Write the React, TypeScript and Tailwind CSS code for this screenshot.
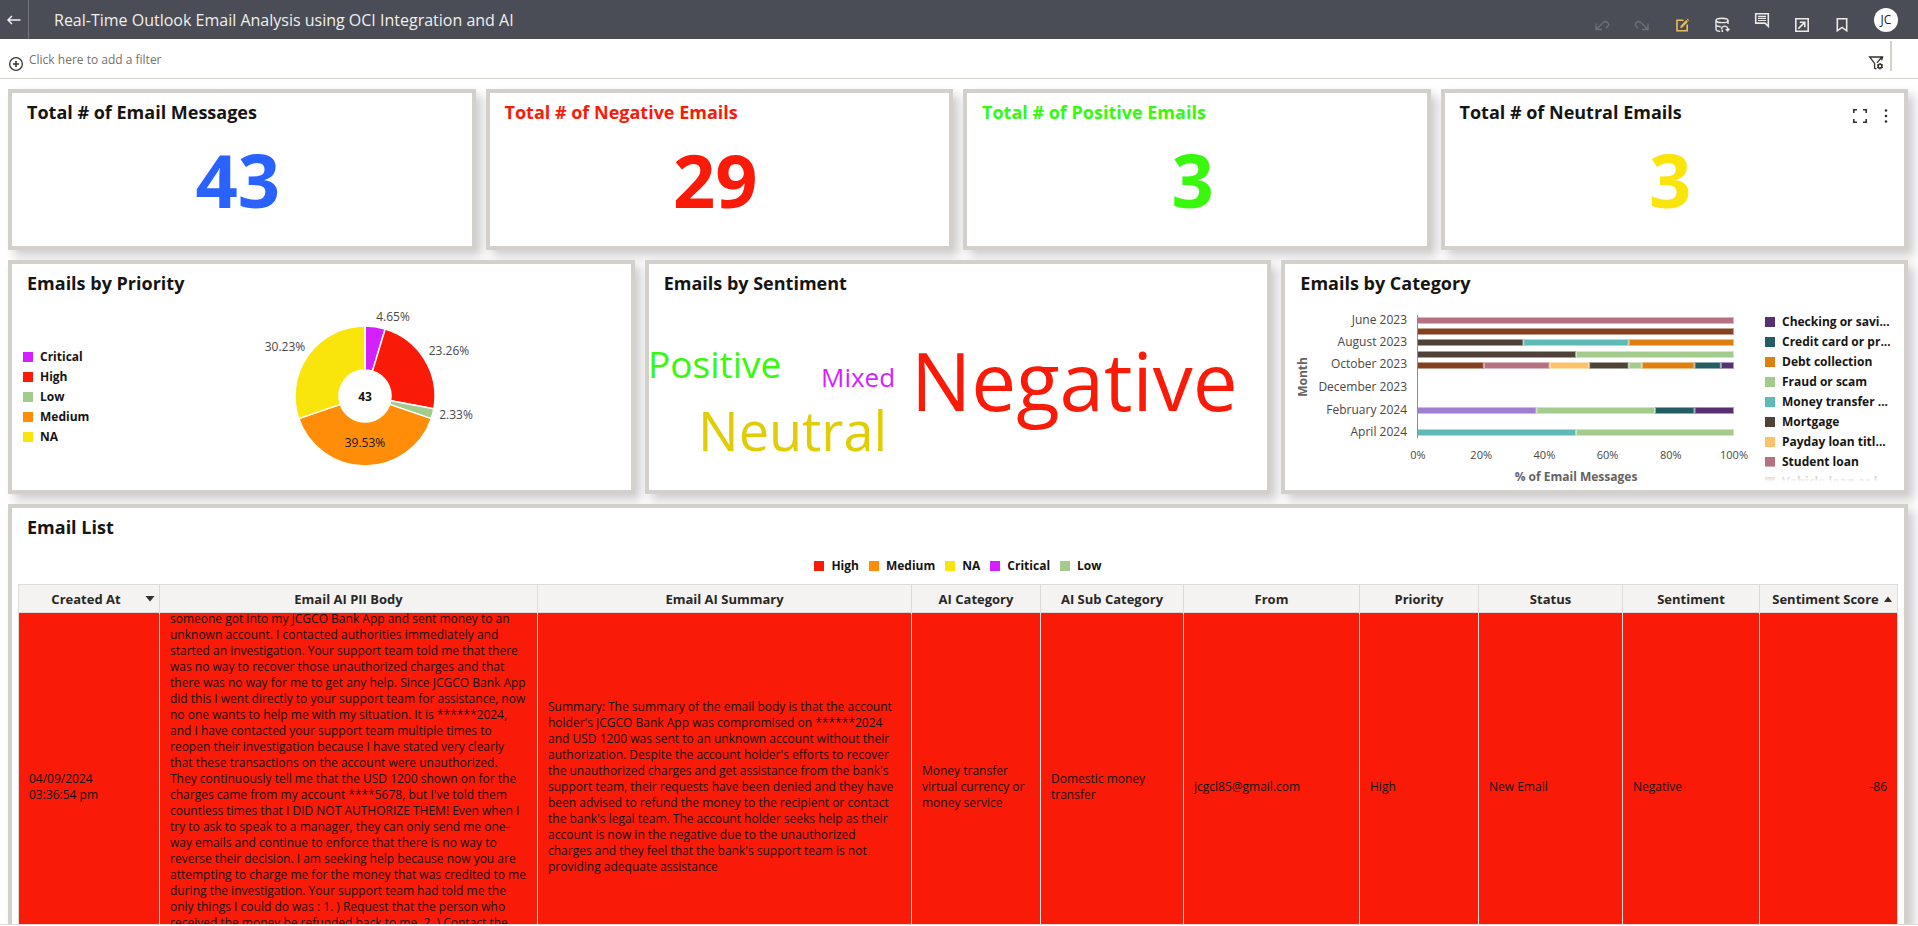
import React from "react";

type Tone = { label: string; swatch: string };

function IconButton({ label, low = false, children }: { label: string; low?: boolean; children: React.ReactNode }) {
  return (
    <button type="button" aria-label={label} className={low ? "flex h-full w-10 items-center justify-center pt-2.5" : "flex h-full w-10 items-center justify-center"}>
      <svg viewBox="0 0 16 16" className="h-4 w-4" fill="none" stroke="currentColor" strokeWidth="1.4">
        {children}
      </svg>
    </button>
  );
}

function Header() {
  return (
    <header className="flex h-[39px] shrink-0 items-center bg-[#4a4d55] text-[#f1efed]">
      <button type="button" aria-label="Back" className="flex h-full w-[29px] items-center justify-center border-r border-[#74767c]">
        <svg viewBox="0 0 16 16" className="h-4 w-4" fill="none" stroke="currentColor" strokeWidth="1.5">
          <path d="M14.5 8H2.2M6 4L2 8l4 4" />
        </svg>
      </button>
      <h1 className="flex-1 pl-[25px] text-base leading-6">Real-Time Outlook Email Analysis using OCI Integration and AI</h1>
      <div className="flex h-full text-[#eceae8]">
        <div className="flex h-full text-[#6c6f76]">
          <IconButton label="Undo" low>
            <path d="M2 6.500v6h6M2.500 12l6.800-6.600a3 3 0 0 1 4.300 0 3 3 0 0 1 0 4.200L12 11.200" />
          </IconButton>
          <IconButton label="Redo" low>
            <path d="M14 6.500v6H8M13.500 12L6.700 5.400a3 3 0 0 0-4.300 0 3 3 0 0 0 0 4.200L4 11.200" />
          </IconButton>
        </div>
        <div className="text-[#e9bd5b]">
          <IconButton label="Edit" low>
            <path d="M9.500 3.200H3v10.600h10.200V7.500" strokeWidth="1.600" />
            <path d="M6.200 11l.5-2.300 5.500-5.600 1.700 1.700-5.600 5.600z" fill="currentColor" stroke="none" />
            <path d="M12.800 2.600l.8-.8 1.400 1.400-.8.8z" fill="currentColor" stroke="none" />
          </IconButton>
        </div>
        <IconButton label="Refresh data" low>
          <ellipse cx="8" cy="3.400" rx="6" ry="2.200" />
          <path d="M2 3.400v8.800c0 1.100 1.800 2 4.200 2.200M14 3.400V7M2 7.600c0 1.100 1.900 2 4.800 2.200" />
          <path d="M7.500 12.200a3.200 3.200 0 0 1 6.200-1v2.600M15.500 11.800l-1.800 2-2-1.600M8.300 15v-2.200" />
        </IconButton>
        <IconButton label="Comments">
          <path d="M1.700 1.700h12.600v12.600l-3.300-3.200H1.700z" strokeWidth="1.600" />
          <path d="M4 4.300h8M4 6.400h8M4 8.500h8" strokeWidth="1.200" />
        </IconButton>
        <IconButton label="Open in new window" low>
          <path d="M1.800 1.800h12.400v12.400H1.800z" strokeWidth="1.600" />
          <path d="M5.800 5.200h5v5M10.600 5.400L4.400 11.600" strokeWidth="1.600" />
        </IconButton>
        <IconButton label="Bookmark" low>
          <path d="M3.300 1.800h9.400v12L8 10.400l-4.700 3.400z" strokeWidth="1.600" />
        </IconButton>
      </div>
      <button type="button" className="mr-5 ml-3 h-6 w-6 rounded-full bg-white text-center text-[12px] leading-6 text-[#222]">JC</button>
    </header>
  );
}

function FilterBar() {
  return (
    <div className="flex h-10 shrink-0 items-stretch border-b border-[#d3cfca]">
      <button type="button" className="flex gap-[5px] pt-3 pl-2 text-[12px] leading-[18px] text-[#77716b]">
        <svg viewBox="0 0 16 16" className="mt-[5px] h-4 w-4 text-[#3a3632]" fill="none" stroke="currentColor" strokeWidth="1.3">
          <circle cx="8" cy="8" r="6.300" />
          <path d="M8 5v6M5 8h6" strokeWidth="1.600" />
        </svg>
        Click here to add a filter
      </button>
      <button type="button" aria-label="Filter settings" className="mr-[6px] ml-auto pt-[9px] text-[#33302d]">
        <svg viewBox="0 0 16 16" className="h-4 w-4" fill="none" stroke="currentColor" strokeWidth="1.300">
          <path d="M13.600 5.200L14.600 2H1.600l5 6.400v4.800l2 .8M9 7.800L13.800 2" />
          <circle cx="12" cy="11.200" r="1.900" strokeWidth="1.500" />
          <path d="M12 8v1.200M12 13.200v1.200M9.200 9.600l1 .6M13.800 12.200l1 .6M14.800 9.600l-1 .6M10.200 12.200l-1 .6" strokeWidth="1.100" />
        </svg>
      </button>
      <span className="mt-[2px] mr-[26px] h-[30px] w-[2px] bg-[#d3cfca]" />
    </div>
  );
}

const cardBox = "border-4 border-[#d3cfca] bg-white shadow-[6px_6px_10px_rgba(0,0,0,0.2)]";

function Card({ title, titleClass = "text-[#161513]", className = "", actions, children }: { title: string; titleClass?: string; className?: string; actions?: React.ReactNode; children: React.ReactNode }) {
  return (
    <section className={`${cardBox} ${className}`}>
      <div className="flex h-[38px] items-start justify-between pt-[7px] pl-[15px]">
        <h2 className={`text-[18px] leading-6 font-bold ${titleClass}`}>{title}</h2>
        {actions}
      </div>
      {children}
    </section>
  );
}

const metrics = [
  { title: "Total # of Email Messages", value: 43, titleClass: "text-[#161513]", valueClass: "text-[#2962ff]" },
  { title: "Total # of Negative Emails", value: 29, titleClass: "text-[#fa1a08]", valueClass: "text-[#fa1a08]" },
  { title: "Total # of Positive Emails", value: 3, titleClass: "text-[#37f80d]", valueClass: "text-[#37f80d]" },
  { title: "Total # of Neutral Emails", value: 3, titleClass: "text-[#161513]", valueClass: "text-[#f9e50c]" },
];

function CardActions() {
  return (
    <div className="flex gap-[10px] pt-2 pr-[10px] text-[#33302d]">
      <button type="button" aria-label="Maximize">
        <svg viewBox="0 0 16 16" className="h-4 w-4" fill="none" stroke="currentColor" strokeWidth="1.600">
          <path d="M1.800 5V1.800H5M11 1.800h3.200V5M14.200 11v3.200H11M5 14.200H1.800V11" />
        </svg>
      </button>
      <button type="button" aria-label="Menu">
        <svg viewBox="0 0 16 16" className="h-4 w-4" fill="currentColor">
          <circle cx="8" cy="2.500" r="1.300" />
          <circle cx="8" cy="8" r="1.300" />
          <circle cx="8" cy="13.500" r="1.300" />
        </svg>
      </button>
    </div>
  );
}

function Legend({ items, className }: { items: Tone[]; className: string }) {
  return (
    <ul className={className}>
      {items.map((item) => (
        <li key={item.label} className="flex items-center gap-[7px] text-[12px] leading-5 font-bold whitespace-nowrap text-[#161513]">
          <span className={`h-[10px] w-[10px] shrink-0 ${item.swatch}`} />
          {item.label}
        </li>
      ))}
    </ul>
  );
}

const critical = { label: "Critical", swatch: "bg-[#d41fff]" };
const high = { label: "High", swatch: "bg-[#fa1a08]" };
const low = { label: "Low", swatch: "bg-[#a2cb8c]" };
const medium = { label: "Medium", swatch: "bg-[#ff8d07]" };
const na = { label: "NA", swatch: "bg-[#f9e50c]" };

const slices = [
  { share: 4.65, fill: "#d41fff", x: 118, y: 21 },
  { share: 23.26, fill: "#fa1a08", x: 174, y: 55 },
  { share: 2.33, fill: "#a2cb8c", x: 181, y: 119 },
  { share: 39.53, fill: "#ff8d07", x: 90, y: 147 },
  { share: 30.23, fill: "#f9e50c", x: 10, y: 51 },
];

function Donut() {
  const cx = 90;
  const cy = 96;
  const at = (turn: number, r: number) => {
    const a = turn * 2 * Math.PI;
    return `${cx + r * Math.sin(a)} ${cy - r * Math.cos(a)}`;
  };
  let from = 0;
  return (
    <svg width="230" height="182" viewBox="-25 2 230 182" className="shrink-0 text-[12px]" role="img" aria-label="Emails by priority">
      {slices.map((s) => {
        const start = from;
        const end = from + s.share / 100;
        from = end;
        const large = end - start > 0.5 ? 1 : 0;
        return (
          <path
            key={s.fill}
            d={`M${at(start, 70)}A70 70 0 ${large} 1 ${at(end, 70)}L${at(end, 26)}A26 26 0 ${large} 0 ${at(start, 26)}Z`}
            fill={s.fill}
            stroke="#fff"
            strokeWidth="1.500"
          />
        );
      })}
      {slices.map((s) => (
        <text key={s.fill} x={s.x} y={s.y} textAnchor="middle" fill={s.share > 35 ? "#161513" : "#4a4744"}>
          {s.share}%
        </text>
      ))}
      <text x={cx} y={cy + 5} textAnchor="middle" fontWeight="700" fill="#161513">
        43
      </text>
    </svg>
  );
}

const words = [
  { text: "Positive", x: -1, y: 114, cls: "text-[37px]", fill: "#37f80d" },
  { text: "Mixed", x: 172, y: 123, cls: "text-[26px]", fill: "#d41fff" },
  { text: "Neutral", x: 49, y: 187, cls: "text-[54px]", fill: "#e0cd05" },
  { text: "Negative", x: 262, y: 147, cls: "text-[80px]", fill: "#fa1a08" },
];

function WordCloud() {
  return (
    <svg width="618" height="188" viewBox="0 38 618 188" role="img" aria-label="Emails by sentiment">
      {words.map((w) => (
        <text key={w.text} x={w.x} y={w.y} fill={w.fill} className={w.cls}>
          {w.text}
        </text>
      ))}
    </svg>
  );
}

const c = {
  checking: "#582f70",
  credit: "#245c63",
  debt: "#df7f10",
  fraud: "#a2cb8c",
  money: "#5fb9b5",
  mortgage: "#4e4137",
  payday: "#fcc26a",
  student: "#b57182",
  vehicle: "#84401f",
  other: "#9f7ecf",
};

const bars: { y: number; parts: [string, number][] }[] = [
  { y: 17, parts: [[c.student, 24]] },
  { y: 28, parts: [[c.vehicle, 24]] },
  { y: 39, parts: [[c.mortgage, 8], [c.money, 8], [c.debt, 8]] },
  { y: 51, parts: [[c.mortgage, 12], [c.fraud, 12]] },
  { y: 62, parts: [[c.vehicle, 5], [c.student, 5], [c.payday, 3], [c.mortgage, 3], [c.fraud, 1], [c.debt, 4], [c.credit, 2], [c.checking, 1]] },
  { y: 107, parts: [[c.other, 9], [c.fraud, 9], [c.credit, 3], [c.checking, 3]] },
  { y: 129, parts: [[c.money, 12], [c.fraud, 12]] },
];

const months: [string, number][] = [
  ["June 2023", 24],
  ["August 2023", 46],
  ["October 2023", 68],
  ["December 2023", 91],
  ["February 2024", 114],
  ["April 2024", 136],
];

function CategoryChart() {
  const unit = 316 / 24;
  return (
    <svg width="464" height="188" viewBox="0 2 464 188" className="shrink-0 text-[12px]" role="img" aria-label="Emails by category">
      <text transform="translate(22 77) rotate(-90)" textAnchor="middle" fontWeight="700" fill="#65625f">
        Month
      </text>
      {months.map(([name, y]) => (
        <text key={name} x="122" y={y} textAnchor="end" fill="#4a4744">
          {name}
        </text>
      ))}
      {bars.map((bar) => {
        let x = 133;
        return bar.parts.map(([fill, n], i) => {
          const left = x;
          x += n * unit;
          return (
            <g key={`${bar.y}-${i}`}>
              <rect x={left} y={bar.y} width={n * unit} height="7" fill={fill} opacity="0.5" />
              <rect x={left + (i ? 1 : 0)} y={bar.y + 1} width={n * unit - (i ? 2 : 1)} height="5" fill={fill} />
            </g>
          );
        });
      })}
      <path d="M132.500 15v123" stroke="#8f8c89" />
      {[0, 20, 40, 60, 80, 100].map((p) => (
        <text key={p} x={133 + p * 3.16} y="159" textAnchor="middle" fontSize="11" fill="#4a4744">
          {p}%
        </text>
      ))}
      <text x="291" y="181" textAnchor="middle" fontWeight="700" fill="#65625f">
        % of Email Messages
      </text>
    </svg>
  );
}

const categories: Tone[] = [
  { label: "Checking or savi...", swatch: "bg-[#582f70]" },
  { label: "Credit card or pr...", swatch: "bg-[#245c63]" },
  { label: "Debt collection", swatch: "bg-[#df7f10]" },
  { label: "Fraud or scam", swatch: "bg-[#a2cb8c]" },
  { label: "Money transfer ...", swatch: "bg-[#5fb9b5]" },
  { label: "Mortgage", swatch: "bg-[#4e4137]" },
  { label: "Payday loan titl...", swatch: "bg-[#fcc26a]" },
  { label: "Student loan", swatch: "bg-[#b57182]" },
  { label: "Vehicle loan or l...", swatch: "bg-[#84401f]" },
];

const columns = [
  { name: "Created At", width: "w-[141px]", sort: "down" },
  { name: "Email AI PII Body", width: "w-[378px]" },
  { name: "Email AI Summary", width: "w-[374px]" },
  { name: "AI Category", width: "w-[129px]" },
  { name: "AI Sub Category", width: "w-[143px]" },
  { name: "From", width: "w-[176px]" },
  { name: "Priority", width: "w-[119px]" },
  { name: "Status", width: "w-[144px]" },
  { name: "Sentiment", width: "w-[137px]" },
  { name: "Sentiment Score", width: "w-[138px]", sort: "up" },
];

const bodyLines = [
  "someone got into my JCGCO Bank App and sent money to an",
  "unknown account. I contacted authorities immediately and",
  "started an investigation. Your support team told me that there",
  "was no way to recover those unauthorized charges and that",
  "there was no way for me to get any help. Since JCGCO Bank App",
  "did this I went directly to your support team for assistance, now",
  "no one wants to help me with my situation. It is ******2024,",
  "and I have contacted your support team multiple times to",
  "reopen their investigation because I have stated very clearly",
  "that these transactions on the account were unauthorized.",
  "They continuously tell me that the USD 1200 shown on for the",
  "charges came from my account ****5678, but I've told them",
  "countless times that I DID NOT AUTHORIZE THEM! Even when I",
  "try to ask to speak to a manager, they can only send me one-",
  "way emails and continue to enforce that there is no way to",
  "reverse their decision. I am seeking help because now you are",
  "attempting to charge me for the money that was credited to me",
  "during the investigation. Your support team had told me the",
  "only things I could do was : 1. ) Request that the person who",
  "received the money be refunded back to me. 2. ) Contact the",
];

const summaryLines = [
  "Summary: The summary of the email body is that the account",
  "holder's JCGCO Bank App was compromised on ******2024",
  "and USD 1200 was sent to an unknown account without their",
  "authorization. Despite the account holder's efforts to recover",
  "the unauthorized charges and get assistance from the bank's",
  "support team, their requests have been denied and they have",
  "been advised to refund the money to the recipient or contact",
  "the bank's legal team. The account holder seeks help as their",
  "account is now in the negative due to the unauthorized",
  "charges and they feel that the bank's support team is not",
  "providing adequate assistance",
];

const cell = "border-r border-[#e4e1dd] px-[10px] align-middle";

function EmailTable() {
  return (
    <table className="w-full table-fixed border-separate border-spacing-0 border-t border-l border-[#dddcda]">
      <thead>
        <tr>
          {columns.map((col) => (
            <th key={col.name} scope="col" className={`${col.width} h-7 border-r border-b border-[#dddcda] bg-[#f4f3f2] p-0 text-[13px] leading-5 font-bold whitespace-nowrap text-[#2a2725]`}>
              {col.sort ? (
                <button type="button" className="flex w-full items-center pr-1 pl-2 font-bold">
                  <span className="flex-1 text-center">{col.name}</span>
                  <svg viewBox="0 0 10 6" className="h-[6px] w-[10px] shrink-0" fill="#33302d">
                    <path d={col.sort === "down" ? "M0.500 0h9L5 5.500z" : "M1 6h8L5 0.500z"} />
                  </svg>
                </button>
              ) : (
                col.name
              )}
            </th>
          ))}
        </tr>
      </thead>
      <tbody>
        <tr className="bg-[#fa1a08] text-[12px] leading-4 text-[#161513]">
          <td className={cell}>
            04/09/2024
            <br />
            03:36:54 pm
          </td>
          <td className={`${cell} py-0 whitespace-nowrap`}>
            <div className="flex h-[348px] flex-col justify-center overflow-hidden">
              <p className="shrink-0 pb-8">
                {bodyLines.map((line) => (
                  <span key={line} className="block">{line}</span>
                ))}
              </p>
            </div>
          </td>
          <td className={`${cell} whitespace-nowrap`}>
            {summaryLines.map((line) => (
              <span key={line} className="block">{line}</span>
            ))}
          </td>
          <td className={cell}>Money transfer virtual currency or money service</td>
          <td className={cell}>Domestic money transfer</td>
          <td className={cell}>jcgcl85@gmail.com</td>
          <td className={cell}>High</td>
          <td className={cell}>New Email</td>
          <td className={cell}>Negative</td>
          <td className={`${cell} text-right`}>-86</td>
        </tr>
      </tbody>
    </table>
  );
}

export default function App() {
  return (
    <div className="flex h-screen flex-col overflow-hidden bg-white pb-px font-['Open_Sans','Noto_Sans',sans-serif]">
      <Header />
      <FilterBar />
      <main className="flex min-h-0 flex-1 flex-col gap-[10px] overflow-hidden border-b border-[#dddcda] pt-[10px] pr-[10px] pl-2">
        <div className="grid shrink-0 grid-cols-4 gap-[10px]">
          {metrics.map((m, i) => (
            <Card key={m.title} title={m.title} titleClass={m.titleClass} className="h-[161px]" actions={i === 3 ? <CardActions /> : undefined}>
              <p className={`pr-2 text-center text-[74px] leading-[98px] font-bold ${m.valueClass}`}>{m.value}</p>
            </Card>
          ))}
        </div>
        <div className="grid shrink-0 grid-cols-3 gap-[10px]">
          <Card title="Emails by Priority" className="h-[234px]">
            <div className="flex">
              <Legend items={[critical, high, low, medium, na]} className="w-[238px] shrink-0 pt-[45px] pl-[11px]" />
              <Donut />
            </div>
          </Card>
          <Card title="Emails by Sentiment" className="h-[234px]">
            <WordCloud />
          </Card>
          <Card title="Emails by Category" className="h-[234px]">
            <div className="flex justify-between pr-[14px]">
              <CategoryChart />
              <div className="relative mt-[10px] h-[170px] w-[125px] shrink-0 overflow-hidden">
                <Legend items={categories} className="" />
                <div className="absolute inset-x-0 bottom-0 h-4 bg-gradient-to-b from-white/40 to-white" />
              </div>
            </div>
          </Card>
        </div>
        <Card title="Email List" className="shrink-0">
          <Legend items={[high, medium, na, critical, low]} className="mt-[10px] mb-2 flex justify-center gap-[10px]" />
          <div className="px-[6px]">
            <EmailTable />
          </div>
        </Card>
      </main>
    </div>
  );
}
